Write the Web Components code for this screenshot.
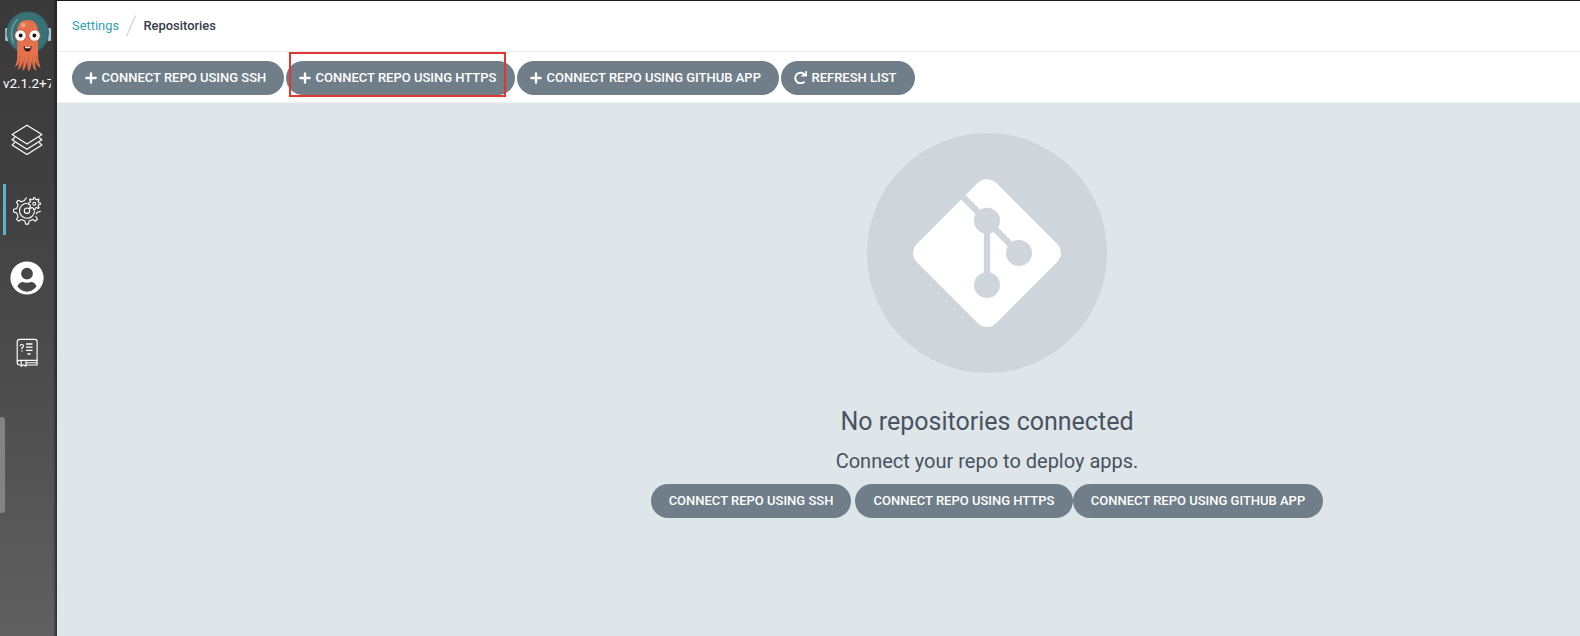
<!DOCTYPE html>
<html lang="en">
<head>
<meta charset="utf-8">
<title>Repositories</title>
<style>
html,body{margin:0;height:100%;overflow:hidden;font-family:Roboto,"Liberation Sans",sans-serif}
</style>
</head>
<body>
<argo-app></argo-app>
<script>
const define = (name, html) => {
  const t = document.createElement('template');
  t.innerHTML = html;
  customElements.define(name, class extends HTMLElement {
    constructor() {
      super();
      this.attachShadow({mode: 'open'}).appendChild(t.content.cloneNode(true));
    }
  });
};

// Outline of a cog: teeth alternating between two radii, from tooth `from` up to tooth `to`.
const cog = (cx, cy, r, R, n, from = 0, to = n) => {
  const p = (rad, a) => (cx + rad * Math.cos(a)).toFixed(2) + ' ' + (cy + rad * Math.sin(a)).toFixed(2);
  const step = 2 * Math.PI / n;
  let d = '';
  for (let i = from; i < to; i++) {
    const a = i * step - Math.PI / 2;
    d += (d ? 'L' : 'M') + p(r, a - step * .26) + 'L' + p(R, a - step * .13) + 'L' + p(R, a + step * .13) + 'L' + p(r, a + step * .26);
  }
  return d + (to - from === n ? 'Z' : '');
};

define('argo-logo', `
<style>:host{display:block;height:63px}svg{display:block}</style>
<svg width="57" height="63" viewBox="0 10 57 63">
  <rect x="5.2" y="28" width="3.4" height="13" rx="1" fill="#a9c3d6"/><rect x="47.6" y="28" width="3.4" height="13" rx="1" fill="#a9c3d6"/>
  <circle cx="27.8" cy="32.6" r="21.2" fill="#34686b"/><circle cx="27.8" cy="32.6" r="19.8" fill="#3a7174"/>
  <path d="M17.6 19.2Q8.3 29 13.4 43" fill="none" stroke="#7fa5a5" stroke-width="1.2"/>
  <path d="M17.2 33C17.2 23.500 21 20 27.600 20S38.100 23.500 38.100 33V53C38.100 60 39 64 40.800 67.500C37.500 67 36.300 63.500 35.500 61C35.200 65 35 68 36.500 70.500C33.500 70 32.500 66 31.800 61C31.200 66 30.500 69 28.800 71.500C27 69 27.400 65 27 61C26 66 25 69.500 22.500 71C22.800 68 23.300 65 23.200 61C22 65 20.800 69 17.300 69.500C19 67 19.500 64 19.400 61C18 64 17 66.500 14.800 67C17 63 17.200 59 17.200 53Z" fill="#e3714c"/>
  <path d="M20.200 56L18.500 65M24.500 57L22.800 68M28.500 57V69M32.500 57L34 67M36 56L37.700 64" stroke="#c65d3d" stroke-width=".9"/>
  <circle cx="23.200" cy="25.200" r="2.400" fill="#f19c7c"/>
  <circle cx="20.700" cy="35.600" r="6" fill="#d15f3d"/><circle cx="34.500" cy="35.600" r="6" fill="#d15f3d"/>
  <circle cx="20.500" cy="35.500" r="5.200" fill="#fff"/><circle cx="34.600" cy="35.500" r="5.200" fill="#fff"/>
  <circle cx="20.700" cy="35.500" r="1.900" fill="#111"/><circle cx="34.400" cy="35.500" r="1.900" fill="#111"/>
  <path d="M23.600 46.300Q27.600 48 31.600 46.300Q31 51.500 27.600 51.500T23.600 46.300Z" fill="#331614"/><path d="M25 46.800Q27.600 47.700 30.200 46.800V48.300H25Z" fill="#fff"/>
</svg>`);

define('nav-icon-apps', `
<style>:host{display:block}svg{display:block}</style>
<svg width="32" height="32" viewBox="11 124 32 32" fill="none" stroke="#fff" stroke-width="1.15" stroke-linejoin="round" stroke-linecap="round">
<path d="M27 125.200L41.900 134.600L27 144.100L12.100 134.600Z"/><path d="M14.600 137.700L12.100 139.700L27 149.300L41.900 139.700L39.400 137.700"/><path d="M14.600 142.800L12.100 144.900L27 154.500L41.900 144.900L39.400 142.800"/></svg>`);

define('nav-icon-settings', `
<style>:host{display:block}svg{display:block}</style>
<svg width="32" height="32" viewBox="12 195 32 32" fill="none" stroke="#fff" stroke-width="1.100" stroke-linejoin="round" stroke-linecap="round">
<path d="M36.400 213.700L37.500 212.200L40.500 211.300"/><path d="${cog(27, 210.7, 10.6, 13.5, 8, 3, 8)}L24.500 200.400L26.400 197.800"/><path d="M27 203.300A7.500 7.500 0 1 0 34.500 211.500"/>
<circle cx="27" cy="210.700" r="2.700"/><path d="${cog(34.300, 203.700, 4.600, 6.200, 8)}"/><circle cx="34.300" cy="203.700" r="1.500"/></svg>`);

define('nav-icon-user', `
<style>:host{display:block}svg{display:block}</style>
<svg width="34" height="34" viewBox="10 261.300 34 34"><path fill="#fff" fill-rule="evenodd" d="M27 261.700A16.600 16.600 0 1 1 27 294.900A16.600 16.600 0 1 1 27 261.700ZM27 268A5.900 5.900 0 1 0 27 279.800A5.900 5.900 0 1 0 27 268ZM17.400 286.800Q22 292 27 292T36.600 286.800Q34.800 282.300 31.300 282.300Q29.200 283.100 27 283.100T22.700 282.300Q19.200 282.300 17.400 286.800Z"/></svg>`);

define('nav-icon-docs', `
<style>:host{display:block}svg{display:block}</style>
<svg width="24" height="30" viewBox="15.500 338 24 30" fill="none" stroke="#fff" stroke-width="1.150" stroke-linejoin="round">
<path d="M17.700 362.500V342Q17.700 339.400 20.300 339.400H35.500Q37.600 339.400 37.600 341.500V360.300H20Q17.700 360.300 17.700 362.600Q17.700 365 20 365H21.700M26.500 365H37.600V360.300M21.700 360.500V366.300L24.100 364.800L26.500 366.300V360.500M27 362.700H37"/>
<path d="M26.500 344H33M26.500 347.200H33M26.500 350.400H33M28 354H31" stroke-width="1.300"/><path d="M20.600 346.100Q20.600 344.500 22.300 344.500T24 346.100Q24 347.200 22.400 347.900V349.100M22.400 350.200V351.400" stroke-width="1.200"/></svg>`);

define('argo-sidebar', `
<style>
:host{display:block;width:57px;position:relative;height:636px;flex:none;background:linear-gradient(90deg,transparent 53px,#0004 55px,#201b20a0 56px),linear-gradient(#393939 0,#404040 30%,#4f4f4f 65%,#606060 100%);overflow:hidden}
argo-logo{padding-top:10px}
.version{margin:2px 6px 0 3px;width:48px;height:17px;overflow:hidden;white-space:nowrap;color:#fff;font-size:13.400px;line-height:17px}
nav{display:grid;grid-template-rows:70px 69px 67px 83px;margin-top:13px;justify-items:center;align-items:center;width:54px}
.item{display:flex;align-items:center;justify-content:center;width:100%;height:51px;box-sizing:border-box}
.active{border-left:3px solid #57b5ca;margin-left:3px;width:51px;justify-self:start;justify-content:flex-start}
.active nav-icon-settings{margin:2px 0 0 6px}
.handle{position:absolute;left:0;top:417px;width:5px;height:96px;background:#838383;border-radius:0 3px 3px 0}
</style>
<argo-logo></argo-logo><div class="version">v2.1.2+7</div>
<nav><div class="item"><nav-icon-apps></nav-icon-apps></div><div class="item active"><nav-icon-settings></nav-icon-settings></div><div class="item"><nav-icon-user></nav-icon-user></div><div class="item"><nav-icon-docs></nav-icon-docs></div></nav>
<div class="handle"></div>`);

define('argo-button', `
<style>
:host{display:flex;align-items:center;justify-content:center;height:34px;border-radius:17px;background:#6f7e89;color:#fff;font-size:13px;font-weight:500;line-height:34px;white-space:nowrap;box-sizing:border-box}
::slotted(svg){display:block;flex:none;margin-right:5px}
</style><slot name="icon"></slot><slot></slot>`);

define('page-breadcrumb', `
<style>
:host{display:flex;align-items:center;box-sizing:border-box;height:51px;padding:0 0 2px 15px;border-bottom:1px solid #eceff0;font-size:12.900px;color:#363c4a}
a{color:#35a0b3;width:54px}b{font-weight:500}svg{margin:2px 7.500px 0 0}
</style><a>Settings</a><svg width="10" height="22" fill="none" stroke="#ccd3da" stroke-width="1.200"><path d="M.500 21.500L9.500 .500"/></svg><b>Repositories</b>`);

const plus = '<svg slot="icon" width="12" height="12" viewBox="0 0 12 12" style="margin-top:-1px"><path d="M6 1.300V10.700M1.300 6H10.700" stroke="#fff" stroke-width="2.300" stroke-linecap="round"/></svg>';
define('page-toolbar', `
<style>
:host{display:flex;position:relative;box-sizing:border-box;height:51px;padding:9px 0 0 15px;gap:2px;border-bottom:1px solid #edf1f3}
argo-button{justify-content:flex-start;padding-left:12.500px}
.mark{position:absolute;left:232px;top:0;width:217px;height:45px;box-sizing:border-box;border:2px solid #df372f}
</style>
<argo-button style="width:212px">${plus}CONNECT REPO USING SSH</argo-button>
<argo-button style="width:229px">${plus}CONNECT REPO USING HTTPS</argo-button>
<argo-button style="width:262px">${plus}CONNECT REPO USING GITHUB APP</argo-button>
<argo-button style="width:134px"><svg slot="icon" width="13" height="13" viewBox="0 0 13 13" style="margin-top:-2px" fill="none" stroke="#fff" stroke-width="2"><path d="M10.500 10.600A5.300 5.300 0 1 1 10.800 3.900"/><path d="M13 0V5.600H7.400V4.200L9.800 3.600L11.400 2V0Z" fill="#fff" stroke="none"/></svg>REFRESH LIST</argo-button>
<div class="mark"></div>`);

define('empty-state', `
<style>
:host{display:flex;flex:1;background:#dee6e9;color:#495261;padding:30px 0 0 594px}
.col{display:flex;flex-direction:column;align-items:center;width:672px}
svg{display:block}
h4,h5{margin:0;font-weight:400;white-space:nowrap}
h4{font-size:25px;line-height:30px;margin-top:34px}
h5{font-size:20px;line-height:26px;margin-top:11px}
.row{display:flex;margin-top:10px;width:672px}
</style>
<div class="col">
<svg width="240" height="240" viewBox="-120 -120 240 240"><circle r="120" fill="#ced6dc"/>
<rect x="-56.100" y="-56.100" width="112.200" height="112.200" rx="13.200" fill="#fff" transform="rotate(45)"/>
<g fill="#ced6dc" stroke="#ced6dc"><path d="M-30 -62L0 -32L32 0M0 -32V32" stroke-width="6.300" fill="none"/><g stroke="none"><circle cy="-32.200" r="13"/><circle cx="32" r="13"/><circle cy="32" r="13"/></g></g></svg>
<h4>No repositories connected</h4><h5>Connect your repo to deploy apps.</h5>
<div class="row"><argo-button style="width:200px;margin-right:4px">CONNECT REPO USING SSH</argo-button><argo-button style="width:218px">CONNECT REPO USING HTTPS</argo-button><argo-button style="width:250px">CONNECT REPO USING GITHUB APP</argo-button></div>
</div>`);

define('argo-app', `
<style>
:host{display:flex;width:1580px;height:636px;overflow:hidden;background:#fff}
main{display:flex;flex-direction:column;flex:1;min-width:0;border-top:1px solid #1f1b20;box-sizing:border-box}
</style>
<argo-sidebar></argo-sidebar><main><page-breadcrumb></page-breadcrumb><page-toolbar></page-toolbar><empty-state></empty-state></main>`);
</script>
</body>
</html>
